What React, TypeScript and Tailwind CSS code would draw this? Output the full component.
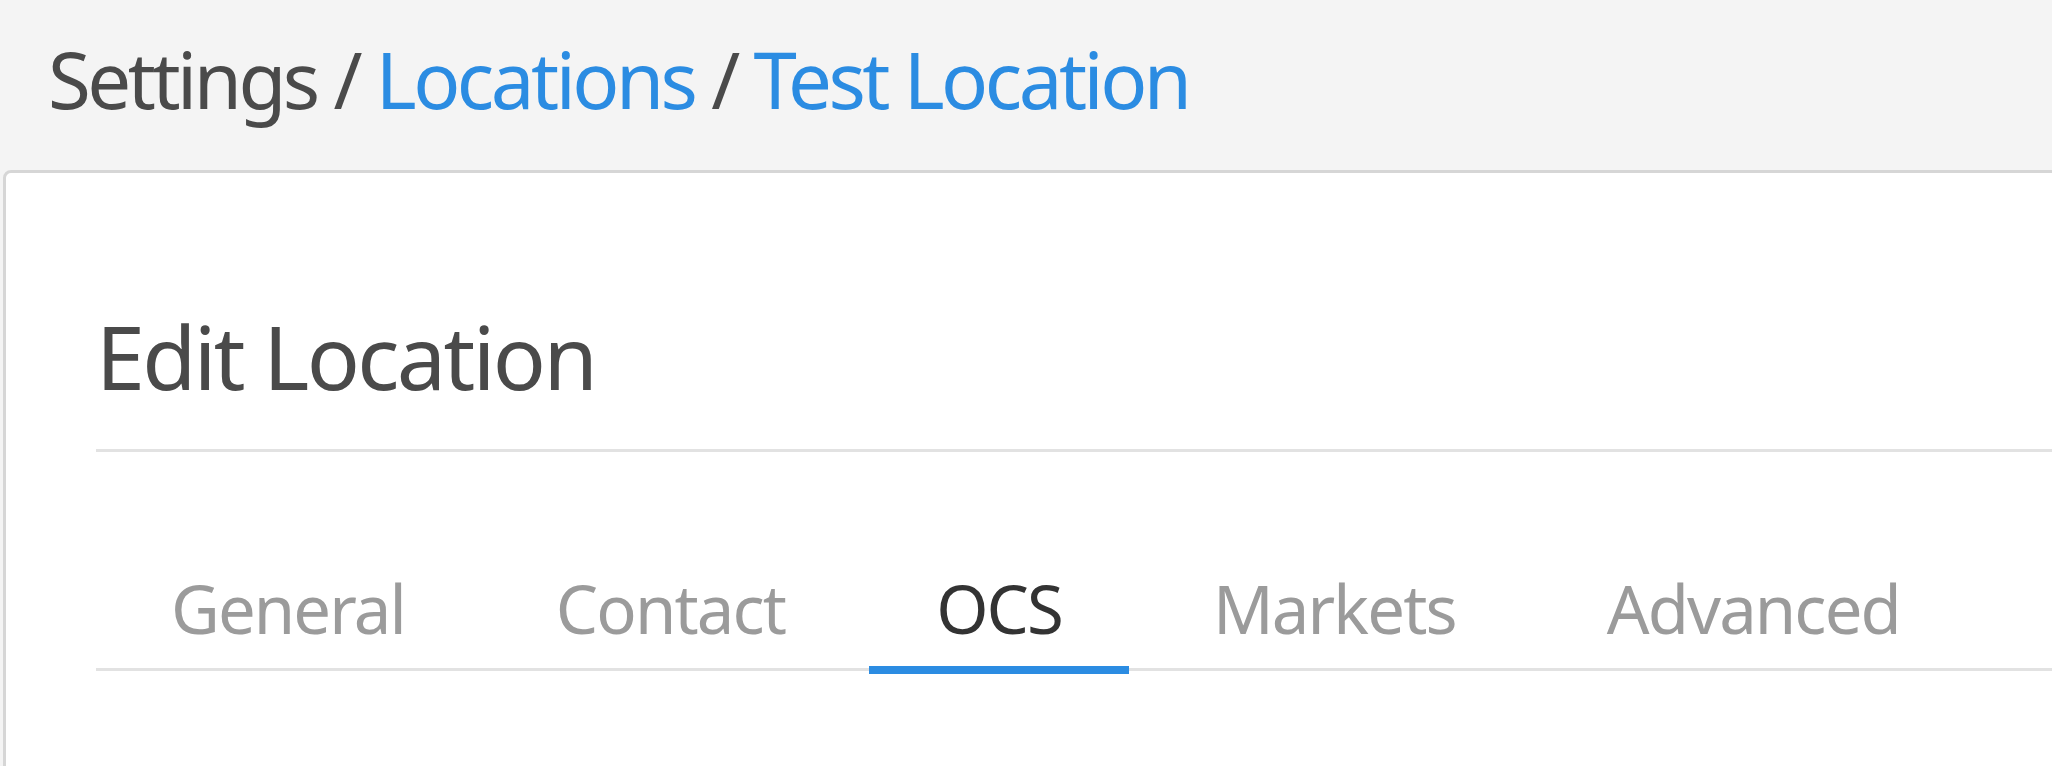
import React from 'react';

const TABS = ['General', 'Contact', 'OCS', 'Markets', 'Advanced'];

function Breadcrumb() {
  return (
    <div className="pl-[48px] pt-[40px] h-[170px] text-[78px] leading-none tracking-[-0.045em] text-[#4a4a4a] whitespace-nowrap">
      <span>Settings</span>
      <span> / </span>
      <a className="text-[#2b8ce2]">Locations</a>
      <span> / </span>
      <a className="text-[#2b8ce2]">Test Location</a>
    </div>
  );
}

function Tabs({ active }: { active: string }) {
  return (
    <div className="mt-[123px] flex gap-[17px] pl-[8px] border-b-[3px] border-[#e2e2e2]">
      {TABS.map((t) => (
        <button
          key={t}
          className={`px-[67px] pb-[24px] -mb-[6px] border-b-[8px] text-[67px] leading-none tracking-[-0.028em] ${
            t === active
              ? 'border-[#2b8ce2] text-[#333333]'
              : 'border-transparent text-[#9b9b9b]'
          }`}
        >
          {t}
        </button>
      ))}
    </div>
  );
}

export default function App() {
  return (
    <div
      className="w-[2052px] h-[766px] overflow-hidden bg-[#f4f4f4]"
      style={{ fontFamily: '"Noto Sans", "Open Sans", sans-serif' }}
    >
      <Breadcrumb />
      <div className="ml-[3px] w-[2200px] h-[800px] bg-white border-[3px] border-[#d6d6d6] rounded-[8px] pl-[90px] pt-[139px]">
        <div className="border-b-[3px] border-[#e2e2e2] pb-[49px]">
          <h1 className="text-[88px] leading-none tracking-[-0.03em] text-[#4a4a4a]">Edit Location</h1>
        </div>
        <Tabs active="OCS" />
      </div>
    </div>
  );
}
